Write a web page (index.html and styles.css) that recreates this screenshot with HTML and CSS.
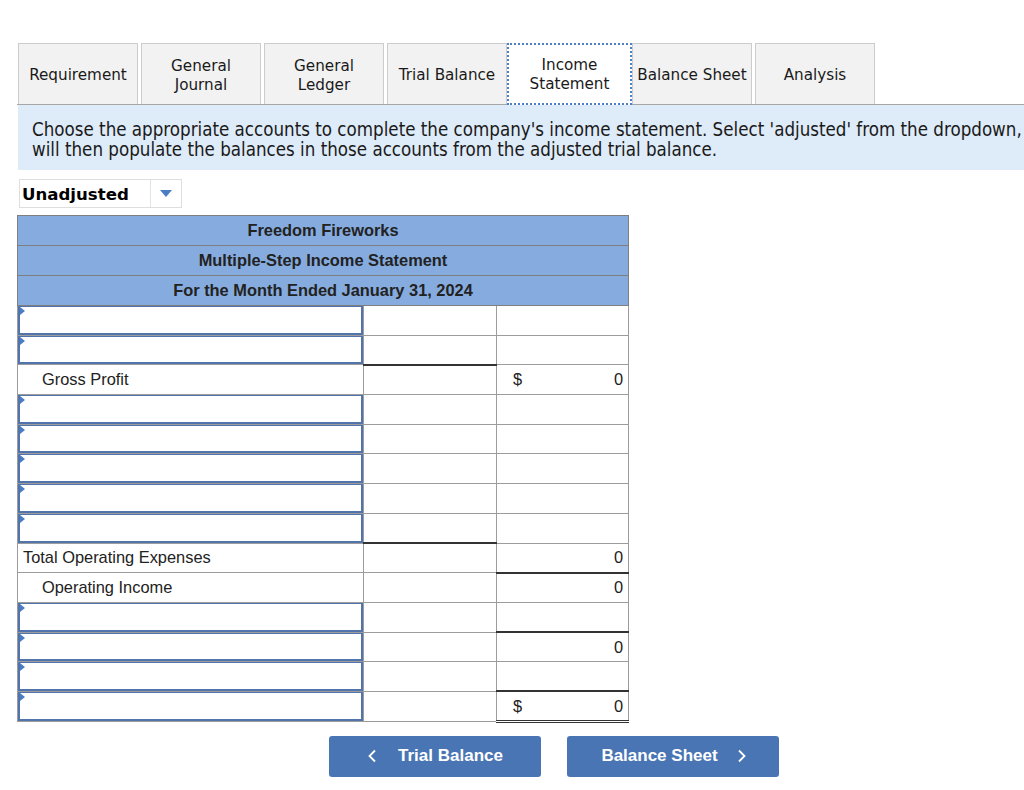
FILE: index.html
```html
<!DOCTYPE html>
<html>
<head>
<meta charset="utf-8">
<title>Income Statement</title>
<link rel="stylesheet" href="styles.css">
</head>
<body>
<div class="page">
  <div class="tabs">
    <div class="tab">Requirement</div>
    <div class="tab">General<br>Journal</div>
    <div class="tab">General<br>Ledger</div>
    <div class="tab">Trial Balance</div>
    <div class="tab active">Income<br>Statement</div>
    <div class="tab">Balance Sheet</div>
    <div class="tab">Analysis</div>
  </div>
  <div class="instructions">
    <span class="line">Choose the appropriate accounts to complete the company's income statement. Select 'adjusted' from the dropdown,</span>
    <span class="line">will then populate the balances in those accounts from the adjusted trial balance.</span>
  </div>
  <div class="select">
    <span class="select-text">Unadjusted</span>
    <span class="select-btn"><span class="arrow"></span></span>
  </div>
  <table class="stmt">
    <colgroup><col class="c1"><col class="c2"><col class="c3"></colgroup>
    <tr class="hd"><td colspan="3">Freedom Fireworks</td></tr>
    <tr class="hd"><td colspan="3">Multiple-Step Income Statement</td></tr>
    <tr class="hd"><td colspan="3">For the Month Ended January 31, 2024</td></tr>
    <tr><td class="in"><div class="inp"></div></td><td></td><td></td></tr>
    <tr><td class="in"><div class="inp"></div></td><td></td><td></td></tr>
    <tr><td class="lbl indent">Gross Profit</td><td class="dark-top"></td><td class="num"><span class="dollar">$</span>0</td></tr>
    <tr><td class="in"><div class="inp"></div></td><td></td><td></td></tr>
    <tr><td class="in"><div class="inp"></div></td><td></td><td></td></tr>
    <tr><td class="in"><div class="inp"></div></td><td></td><td></td></tr>
    <tr><td class="in"><div class="inp"></div></td><td></td><td></td></tr>
    <tr><td class="in"><div class="inp"></div></td><td></td><td></td></tr>
    <tr><td class="lbl">Total Operating Expenses</td><td class="dark-top"></td><td class="num">0</td></tr>
    <tr><td class="lbl indent">Operating Income</td><td></td><td class="num dark-top">0</td></tr>
    <tr><td class="in"><div class="inp"></div></td><td></td><td></td></tr>
    <tr><td class="in"><div class="inp"></div></td><td></td><td class="num dark-top">0</td></tr>
    <tr><td class="in"><div class="inp"></div></td><td></td><td></td></tr>
    <tr><td class="in"><div class="inp"></div></td><td></td><td class="num dark-top double-bottom"><span class="dollar">$</span>0</td></tr>
  </table>
  <div class="nav">
    <button class="btn"><svg class="chev" width="8" height="14" viewBox="0 0 8 14"><polyline points="7,1.5 1.5,7 7,12.5" fill="none" stroke="#fff" stroke-width="1.8"/></svg><span>Trial Balance</span></button>
    <button class="btn"><span>Balance Sheet</span><svg class="chev" width="8" height="14" viewBox="0 0 8 14"><polyline points="1,1.5 6.5,7 1,12.5" fill="none" stroke="#fff" stroke-width="1.8"/></svg></button>
  </div>
</div>
</body>
</html>
```

FILE: styles.css
```css
html, body {
  margin: 0;
  padding: 0;
  background: #fff;
  overflow: hidden;
}

.page {
  margin-left: 17px;
  width: 1007px;
  padding-top: 43px;
}

.tabs {
  display: flex;
  gap: 3px;
  padding-left: 1px;
  border-bottom: 1px solid #a6a6a6;
  height: 61px;
  align-items: stretch;
}

.tab {
  box-sizing: border-box;
  width: 120px;
  height: 61px;
  padding-top: 3px;
  background: #f2f2f2;
  border: 1px solid #cccccc;
  border-bottom: none;
  display: flex;
  align-items: center;
  justify-content: center;
  text-align: center;
  font-family: "DejaVu Sans", Verdana, sans-serif;
  font-size: 15.2px;
  line-height: 19px;
  color: #1a1a1a;
}

.tab.active {
  width: 125px;
  height: 62px;
  padding-top: 2px;
  background: #fff;
  border: 2px dotted #4f7fc6;
  margin-left: -3px;
  margin-right: -3px;
}

.instructions {
  background: #deebf8;
  height: 65px;
  box-sizing: border-box;
  padding: 15px 0 0 14px;
  margin-left: 1px;
  font-family: "DejaVu Sans Condensed", "DejaVu Sans", sans-serif;
  font-stretch: condensed;
  font-size: 18.6px;
  line-height: 20px;
  color: #1a1a1a;
  overflow: hidden;
}

.instructions .line {
  display: block;
  white-space: nowrap;
}

.select {
  margin: 9px 0 0 2px;
  width: 163px;
  height: 29px;
  box-sizing: border-box;
  border: 1px solid #dedede;
  display: flex;
  align-items: stretch;
  font-family: "DejaVu Sans", Verdana, sans-serif;
  font-weight: bold;
  font-size: 16.6px;
  color: #000;
}

.select-text {
  flex: 1;
  display: flex;
  align-items: center;
  padding-left: 2px;
  padding-top: 1px;
}

.select-btn {
  width: 30px;
  border-left: 1px solid #e3e3e3;
  display: flex;
  align-items: center;
  justify-content: center;
}

.arrow {
  width: 0;
  height: 0;
  border-left: 6.5px solid transparent;
  border-right: 6.5px solid transparent;
  border-top: 7px solid #4a7dc4;
}

.stmt {
  margin-top: 7px;
  border-collapse: collapse;
  table-layout: fixed;
  width: 611px;
  font-family: "Liberation Sans", Arial, sans-serif;
  font-size: 16.4px;
  color: #222;
  border: 1px solid #8c8c8c;
}

.stmt col.c1 { width: 346px; }
.stmt col.c2 { width: 133px; }
.stmt col.c3 { width: 132px; }

.stmt td {
  border: 1px solid #9c9c9c;
  height: 29.7px;
  padding: 0;
  box-sizing: border-box;
}

.stmt tr.hd td {
  height: 30px;
  background: #86acdf;
  text-align: center;
  font-weight: bold;
  border: 1px solid #7f7f7f;
  color: #222;
}

.stmt td.lbl {
  padding-left: 5px;
}

.stmt td.lbl.indent {
  padding-left: 24px;
}

.stmt td.num {
  text-align: right;
  padding-right: 5px;
}

.dollar {
  float: left;
  padding-left: 16px;
}

.stmt td.dark-top {
  border-top: 2px solid #333;
}

.stmt td.double-bottom {
  border-bottom: 3px double #333;
}

.stmt td.in {
  padding: 0;
}

.inp {
  position: relative;
  box-sizing: border-box;
  height: 28.7px;
  border: 2px solid #5274ad;
  border-top-width: 1.5px;
  background: #fff;
}

.inp::before {
  content: "";
  position: absolute;
  left: 0;
  top: 0;
  width: 0;
  height: 0;
  border-top: 4px solid transparent;
  border-bottom: 4px solid transparent;
  border-left: 5px solid #4a7dc4;
}

.nav {
  display: flex;
  gap: 26px;
  margin-top: 13px;
  padding-left: 312px;
}

.btn {
  width: 212px;
  height: 41px;
  background: #4a75b5;
  border: none;
  border-radius: 3px;
  color: #fff;
  font-family: "Liberation Sans", Arial, sans-serif;
  font-weight: bold;
  font-size: 17px;
  display: flex;
  align-items: center;
  justify-content: center;
  gap: 21px;
  padding: 0;
}

.btn span {
  position: relative;
  left: 1px;
}

.chev {
  display: block;
}
```
